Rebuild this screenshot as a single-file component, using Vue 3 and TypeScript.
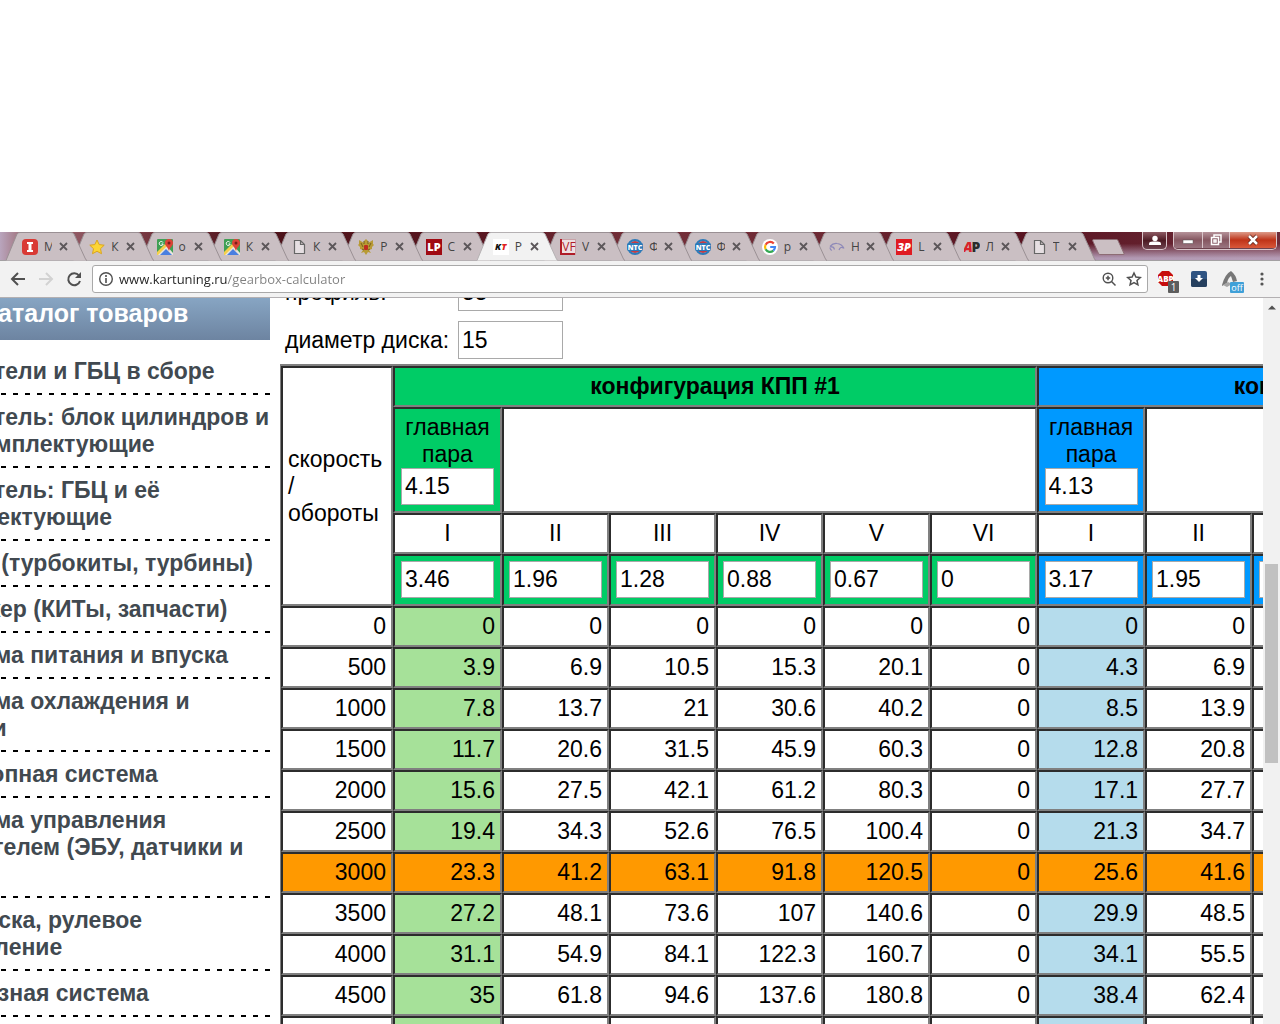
<script setup lang="ts">
import { ref } from 'vue'

interface Tab {
  icon: string
  title: string
  active?: boolean
}

interface Config {
  name: string
  theme: string
  main: string
  ratios: string[]
}

const tabs: Tab[] = [
  { icon: 'info', title: 'М' },
  { icon: 'star', title: 'К' },
  { icon: 'maps', title: 'о' },
  { icon: 'maps', title: 'К' },
  { icon: 'page', title: 'К' },
  { icon: 'eagle', title: 'Р' },
  { icon: 'lp', title: 'С' },
  { icon: 'kt', title: 'Р', active: true },
  { icon: 'vf', title: 'V' },
  { icon: 'ntc', title: 'Ф' },
  { icon: 'ntc', title: 'Ф' },
  { icon: 'google', title: 'р' },
  { icon: 'car', title: 'Н' },
  { icon: 'zr', title: 'L' },
  { icon: 'ar', title: 'Л' },
  { icon: 'page', title: 'Т' },
]

const address = ref('www.kartuning.ru/gearbox-calculator')
const profile = ref('55')
const diameter = ref('15')

const catalog: string[][] = [
  ['Двигатели и ГБЦ в сборе'],
  ['Двигатель: блок цилиндров и', 'его комплектующие'],
  ['Двигатель: ГБЦ и её', 'комплектующие'],
  ['Турбо (турбокиты, турбины)'],
  ['Чарджер (КИТы, запчасти)'],
  ['Система питания и впуска'],
  ['Система охлаждения и', 'смазки'],
  ['Выхлопная система'],
  ['Система управления', 'двигателем (ЭБУ, датчики и', 'т.п.)'],
  ['Подвеска, рулевое', 'управление'],
  ['Тормозная система'],
  ['Кузов'],
]

const gears = ['I', 'II', 'III', 'IV', 'V', 'VI']

const configs = ref<Config[]>([
  { name: 'конфигурация КПП #1', theme: 'green', main: '4.15', ratios: ['3.46', '1.96', '1.28', '0.88', '0.67', '0'] },
  { name: 'конфигурация КПП #2', theme: 'blue', main: '4.13', ratios: ['3.17', '1.95', '1.36', '0.94', '0.78', '0'] },
])

const rows: { rpm: number; first: number[]; second: number[] }[] = [
  { rpm: 0, first: [0, 0, 0, 0, 0, 0], second: [0, 0, 0, 0, 0, 0] },
  { rpm: 500, first: [3.9, 6.9, 10.5, 15.3, 20.1, 0], second: [4.3, 6.9, 9.9, 14.4, 17.3, 0] },
  { rpm: 1000, first: [7.8, 13.7, 21, 30.6, 40.2, 0], second: [8.5, 13.9, 19.9, 28.8, 34.7, 0] },
  { rpm: 1500, first: [11.7, 20.6, 31.5, 45.9, 60.3, 0], second: [12.8, 20.8, 29.8, 43.2, 52, 0] },
  { rpm: 2000, first: [15.6, 27.5, 42.1, 61.2, 80.3, 0], second: [17.1, 27.7, 39.8, 57.5, 69.4, 0] },
  { rpm: 2500, first: [19.4, 34.3, 52.6, 76.5, 100.4, 0], second: [21.3, 34.7, 49.7, 71.9, 86.7, 0] },
  { rpm: 3000, first: [23.3, 41.2, 63.1, 91.8, 120.5, 0], second: [25.6, 41.6, 59.7, 86.3, 104, 0] },
  { rpm: 3500, first: [27.2, 48.1, 73.6, 107, 140.6, 0], second: [29.9, 48.5, 69.6, 100.7, 121.4, 0] },
  { rpm: 4000, first: [31.1, 54.9, 84.1, 122.3, 160.7, 0], second: [34.1, 55.5, 79.5, 115.1, 138.7, 0] },
  { rpm: 4500, first: [35, 61.8, 94.6, 137.6, 180.8, 0], second: [38.4, 62.4, 89.5, 129.5, 156.1, 0] },
  { rpm: 5000, first: [38.9, 68.7, 105.1, 152.9, 200.9, 0], second: [42.7, 69.3, 99.4, 143.9, 173.4, 0] },
]
</script>

<template>
  <div class="window">
    <header class="tabstrip">
      <div class="tabs" role="tablist">
        <div v-for="(tab, i) in tabs" :key="i" class="tab" :class="{ active: tab.active }" :style="{ zIndex: tab.active ? 40 : 20 - i }">
          <svg class="shape" viewBox="0 0 81 29" preserveAspectRatio="none">
            <path d="M0 28.500 L11 2 Q12 .5 14 .5 H65 Q67 .5 68 2 L79 26 Q80 28.500 81 28.500" />
          </svg>
          <button class="tab-main" type="button" role="tab">
            <svg class="favicon" viewBox="0 0 16 16">
              <template v-if="tab.icon === 'info'">
                <rect width="16" height="16" rx="4" fill="#d93a35" />
                <path d="M5 3h6v2H9.500v6H11v2H5v-2h1.500V5H5z" fill="#fff" />
              </template>
              <path v-else-if="tab.icon === 'star'" d="M8 1l2.200 4.600 5 .6-3.700 3.500 1 5L8 12.300 3.500 14.700l1-5L.8 6.200l5-.6z" fill="#fcd535" stroke="#dba520" />
              <template v-else-if="tab.icon === 'maps'">
                <rect width="16" height="16" rx="1" fill="#3f9f54" />
                <path d="M0 15L9 6l7 8v2H1z" fill="#e8e5dc" />
                <path d="M3 16l6-6 6 6z" fill="#4a7fe0" />
                <path d="M0 16V13L8 5l2 2-9 9z" fill="#f5cf4a" />
                <path d="M12 0c3 0 4 2 4 4 0 3-3 4-4 8-1-4-4-5-4-8 0-2 1-4 4-4z" fill="#dc4437" />
                <circle cx="12" cy="4" r="1.500" fill="#7d1e18" />
                <path d="M6 3.500A2 2 0 1 0 6.200 5H4.500" fill="none" stroke="#fff" />
              </template>
              <path v-else-if="tab.icon === 'page'" d="M3.500 1.500h6l4 4v9h-10zM9.500 1.500v4h4" fill="#e6dfe2" stroke="#666" stroke-width="1.200" />
              <template v-else-if="tab.icon === 'eagle'">
                <path d="M6 2l2-2 2 2v2l5-3v4l1 1-2 2v2l-3 1 2 3-3-1-2 3-2-3-3 1 2-3-3-1V8L0 6l1-1V1l5 3z" fill="#b89a35" />
                <path d="M6 2v3M10 2v3M3 4l2 4M13 4l-2 4M4 10l2 1M12 10l-2 1" stroke="#77601c" />
                <rect x="6" y="6" width="4" height="5" rx="1" fill="#bd2d20" />
              </template>
              <template v-else-if="tab.icon === 'lp'">
                <rect width="16" height="16" fill="#a00a12" />
                <text x="8" y="12" class="ico" font-size="11" fill="#fff">LP</text>
              </template>
              <template v-else-if="tab.icon === 'kt'">
                <rect width="16" height="16" fill="#fff" />
                <text x="5" y="11" class="ico slant" font-size="9" fill="#111">K</text>
                <text x="11" y="11" class="ico slant" font-size="9" fill="#e02020">T</text>
              </template>
              <template v-else-if="tab.icon === 'vf'">
                <rect x=".5" y=".5" width="15" height="15" fill="#eee0e2" stroke="#c9a3a8" />
                <path d="M1 0v15h14" fill="none" stroke="#b01c28" stroke-width="2" />
                <text x="9" y="12" class="ico thin" font-size="12" fill="#b01c28">VF</text>
              </template>
              <template v-else-if="tab.icon === 'ntc'">
                <circle cx="8" cy="8" r="6" fill="#c53b44" />
                <circle cx="8" cy="8" r="7" fill="none" stroke="#2d7ab8" stroke-width="2" />
                <rect y="4" width="16" height="8" rx="2" fill="#2d7ab8" />
                <text x="8" y="11" class="ico" font-size="7" fill="#fff">NTC</text>
              </template>
              <template v-else-if="tab.icon === 'google'">
                <circle cx="8" cy="8" r="8" fill="#fff" />
                <g fill="none" stroke-width="2.200">
                  <path d="M11.800 4.600A5 5 0 0 0 3.600 5.700" stroke="#ea4335" />
                  <path d="M3.600 5.700a5 5 0 0 0 0 4.600" stroke="#fbbc05" />
                  <path d="M3.600 10.300a5 5 0 0 0 7.700 1.400" stroke="#34a853" />
                  <path d="M11.300 11.700A5 5 0 0 0 13 8H8.200" stroke="#4285f4" />
                </g>
              </template>
              <path v-else-if="tab.icon === 'car'" d="M1 7.500Q4 4 8 4.500q5 .5 7 5M1 8.500q.5 3 2 2.500M1.500 8q3-1 4 2.500M10 11q1.500-4 4.500-2" fill="none" stroke="#8d88b8" stroke-width="1.200" />
              <template v-else-if="tab.icon === 'zr'">
                <rect width="16" height="16" fill="#e01b22" />
                <text x="8" y="12" class="ico slant" font-size="11" fill="#fff">ЗР</text>
              </template>
              <template v-else>
                <text x="4" y="13" class="ico slant" font-size="14" fill="#d9232a">A</text>
                <text x="12" y="13" class="ico" font-size="14" fill="#2b2b2b">P</text>
              </template>
            </svg>
            <span class="title">{{ tab.title }}</span>
          </button>
          <button class="tab-close" type="button" aria-label="Закрыть вкладку">
            <svg viewBox="0 0 9 9"><path d="M1 1l7 7M8 1l-7 7" stroke="#5c575a" stroke-width="1.800" /></svg>
          </button>
        </div>
      </div>
      <button class="new-tab" type="button" aria-label="Новая вкладка">
        <svg viewBox="0 0 33 16"><path d="M1.500 .5h23q1 0 1.500 1l6 13q.5 1-1 1H8q-1 0-1.500-1L.8 2Q.3.5 1.500 .5z" fill="#cbbfc3" stroke="#8d6c74" /></svg>
      </button>
      <div class="controls">
        <button class="profile" type="button" aria-label="Профиль">
          <svg viewBox="0 0 12 12"><circle cx="6" cy="3.500" r="2.700" fill="#fff" /><path d="M0 10V8.500Q0 6.500 4 6.500h4q4 0 4 2V10z" fill="#fff" /></svg>
        </button>
        <div class="group">
          <button class="min" type="button" aria-label="Свернуть">
            <svg viewBox="0 0 12 12"><rect x="1" y="6" width="10" height="3.500" fill="#fff" stroke="#555" stroke-width=".5" /></svg>
          </button>
          <button class="max" type="button" aria-label="Восстановить">
            <svg viewBox="0 0 12 12"><path d="M4 3V1h7v7H9M1.500 3.500h7v7h-7zM4 6h2v2H4z" fill="none" stroke="#fff" stroke-width="1.500" /></svg>
          </button>
          <button class="close" type="button" aria-label="Закрыть">
            <svg viewBox="0 0 12 12"><path d="M2 2l8 8M10 2l-8 8" stroke="#5b2018" stroke-width="4" /><path d="M2 2l8 8M10 2l-8 8" stroke="#fff" stroke-width="2.500" /></svg>
          </button>
        </div>
      </div>
    </header>

    <nav class="toolbar">
      <button class="nav" type="button" aria-label="Назад">
        <svg viewBox="0 0 16 16"><path d="M15 8H2M8 2L2 8l6 6" fill="none" stroke="#505050" stroke-width="2" /></svg>
      </button>
      <button class="nav" type="button" aria-label="Вперёд">
        <svg viewBox="0 0 16 16"><path d="M1 8h13M8 2l6 6-6 6" fill="none" stroke="#d2d2d2" stroke-width="2" /></svg>
      </button>
      <button class="nav" type="button" aria-label="Обновить">
        <svg viewBox="0 0 16 16"><path d="M13 4.500A6 6 0 1 0 14 10" fill="none" stroke="#505050" stroke-width="2" /><path d="M15 1v6H9z" fill="#505050" /></svg>
      </button>
      <div class="omnibox">
        <svg viewBox="0 0 16 16"><circle cx="8" cy="8" r="6.300" fill="none" stroke="#505050" stroke-width="1.400" /><path d="M8 7v5M8 4v2" stroke="#505050" stroke-width="1.600" /></svg>
        <input v-model="address" type="text" aria-label="Адрес" />
        <button type="button" aria-label="Масштаб">
          <svg viewBox="0 0 16 16"><circle cx="7" cy="7" r="4.800" fill="none" stroke="#505050" stroke-width="1.400" /><path d="M10.500 10.500L14.500 14.500M7 4.800v4.400M4.800 7h4.400" stroke="#505050" stroke-width="1.500" /></svg>
        </button>
        <button type="button" aria-label="Добавить в закладки">
          <svg viewBox="0 0 16 16"><path d="M8 2l1.900 4 4.400.5-3.300 3 .9 4.400L8 11.700l-3.900 2.200.9-4.400-3.300-3L6.100 6z" fill="none" stroke="#505050" stroke-width="1.500" /></svg>
        </button>
      </div>
      <div class="extensions">
        <button type="button" aria-label="Adblock">
          <svg viewBox="0 0 24 24">
            <path d="M6 2h7l4 4v7l-4 4H6l-4-4V6z" fill="#c70d0d" />
            <text x="9.500" y="13" class="ico" font-size="8" fill="#fff">ABP</text>
            <rect x="12" y="12" width="11" height="12" rx="1" fill="#5d5d5d" />
            <text x="17.500" y="22" class="ico thin" font-size="10" fill="#fff">1</text>
          </svg>
        </button>
        <button type="button" aria-label="Загрузки">
          <svg viewBox="0 0 24 24">
            <rect x="3" y="2" width="16" height="16" rx="2" fill="#2f5482" />
            <path d="M3 10h16v6q0 2-2 2H5q-2 0-2-2z" fill="#26405f" />
            <path d="M9.500 6h3v3H15l-4 4-4-4h2.500z" fill="#fff" />
          </svg>
        </button>
        <button type="button" aria-label="Расширение">
          <svg viewBox="0 0 24 24">
            <path d="M2 16Q5 5 11 2q5 4 6 10l-4 1-2-6q-3 2-4 7l-5 3z" fill="#777" />
            <path d="M3 16l5-3 4 2-5 3z" fill="#a5a5a5" />
            <rect x="10" y="13" width="14" height="11" rx="1" fill="#3fa0d8" />
            <text x="17" y="22" class="ico thin" font-size="9" fill="#fff">off</text>
          </svg>
        </button>
        <button type="button" aria-label="Меню">
          <svg viewBox="0 0 24 24"><g fill="#555"><circle cx="10" cy="5" r="1.600" /><circle cx="10" cy="10" r="1.600" /><circle cx="10" cy="15" r="1.600" /></g></svg>
        </button>
      </div>
    </nav>

    <div class="viewport">
      <aside class="sidebar">
        <h2>каталог товаров</h2>
        <ul>
          <li v-for="(item, i) in catalog" :key="i">
            <a href="#"><span v-for="line in item" :key="line">{{ line }}</span></a>
          </li>
        </ul>
      </aside>

      <main class="content">
        <form class="params" @submit.prevent>
          <label for="profile">профиль:</label>
          <input id="profile" v-model="profile" type="text" />
          <label for="diameter">диаметр диска:</label>
          <input id="diameter" v-model="diameter" type="text" />
        </form>

        <table class="calc">
          <colgroup>
            <col class="c-rpm" />
            <template v-for="c in configs" :key="c.theme">
              <col :class="'c-first-' + c.theme" />
              <col v-for="n in 5" :key="n" class="c-gear" />
            </template>
          </colgroup>
          <tbody>
            <tr>
              <td rowspan="4" class="corner">скорость<br />/<br />обороты</td>
              <th v-for="c in configs" :key="c.theme" colspan="6" :class="c.theme">{{ c.name }}</th>
            </tr>
            <tr>
              <template v-for="c in configs" :key="c.theme">
                <td class="entry" :class="c.theme">
                  <label :for="'main-' + c.theme">главная<br />пара</label>
                  <input :id="'main-' + c.theme" v-model="c.main" type="text" />
                </td>
                <td colspan="5"></td>
              </template>
            </tr>
            <tr>
              <template v-for="c in configs" :key="c.theme">
                <td v-for="g in gears" :key="g" class="gear">{{ g }}</td>
              </template>
            </tr>
            <tr>
              <template v-for="c in configs" :key="c.theme">
                <td v-for="(g, i) in gears" :key="g" class="entry" :class="c.theme">
                  <input v-model="c.ratios[i]" type="text" :aria-label="'передача ' + g" />
                </td>
              </template>
            </tr>
            <tr v-for="row in rows" :key="row.rpm" class="data" :class="{ marked: row.rpm === 3000 }">
              <td>{{ row.rpm }}</td>
              <td v-for="(v, i) in row.first" :key="'a' + i" :class="{ 'soft-green': i === 0 }">{{ v }}</td>
              <td v-for="(v, i) in row.second" :key="'b' + i" :class="{ 'soft-blue': i === 0 }">{{ v }}</td>
            </tr>
          </tbody>
        </table>
      </main>

      <div class="scrollbar">
        <svg viewBox="0 0 17 17"><path d="M5 11.500l4-4 4 4z" fill="#505050" /></svg>
        <div class="thumb"></div>
      </div>
    </div>
  </div>
</template>

<style>
body {
  margin: 0;
  background: #fff;
}
</style>

<style scoped>
.window {
  box-sizing: border-box;
  height: 100vh;
  padding-top: 232px;
  display: flex;
  flex-direction: column;
  overflow: hidden;
  font-family: "Liberation Sans", Arial, sans-serif;
  color: #000;
}
button {
  border: 0;
  padding: 0;
  background: none;
  font: inherit;
}
svg {
  display: block;
}
.ico {
  font-family: "Open Sans", sans-serif;
  font-weight: 800;
  text-anchor: middle;
}
.slant {
  font-style: italic;
}
.thin {
  font-weight: 400;
}

.tabstrip {
  flex: none;
  display: flex;
  height: 29px;
  padding-left: 6px;
  background:
    linear-gradient(rgba(255, 255, 255, 0) 40%, rgba(205, 195, 225, 0.75) 90%) right / 216px 100% no-repeat,
    linear-gradient(90deg, #b9a5bd, #a27580 20px, #80404a 120px, #4c1219 260px, #5a1822 480px, #74303a 640px, #6c2833 850px, #571320 1000px, #6e2b38);
  box-shadow: inset 0 -1px #a3a0a2;
}
.tabs {
  display: flex;
  width: 1076px;
}
.tab {
  position: relative;
  flex: 1;
  min-width: 0;
  display: flex;
  align-items: center;
}
.shape {
  position: absolute;
  left: 0;
  top: 0;
  width: 81px;
  height: 29px;
  fill: #cabfc3;
  stroke: #9a9094;
}
.active .shape {
  fill: #f2f2f2;
  stroke: #b5b1b3;
}
.tab-main {
  position: relative;
  display: flex;
  align-items: center;
  gap: 6px;
  margin-left: 16px;
}
.favicon {
  width: 16px;
  height: 16px;
}
.title {
  width: 8px;
  overflow: hidden;
  text-align: left;
  font: 12px/16px "Open Sans", sans-serif;
  color: #444;
}
.tab-close {
  position: relative;
  flex: none;
  margin-left: 7px;
}
.tab-close svg {
  width: 9px;
  height: 9px;
}
.new-tab {
  align-self: flex-start;
  margin: 7px 0 0 10px;
}
.new-tab svg {
  width: 33px;
  height: 16px;
}
.controls {
  display: flex;
  align-items: flex-start;
  gap: 6px;
  margin: 0 3px 0 auto;
}
.controls button {
  display: flex;
  align-items: center;
  justify-content: center;
  height: 16px;
}
.controls svg {
  width: 12px;
  height: 12px;
}
.controls .profile,
.group {
  box-sizing: border-box;
  height: 18px;
  border: 1px solid #d8c5ca;
  border-top: 0;
  border-radius: 0 0 5px 5px;
  background: linear-gradient(#8d5a63, #4d1a23 50%, #6f4450);
}
.controls .profile {
  width: 25px;
}
.group {
  display: flex;
  overflow: hidden;
}
.controls .min {
  width: 28px;
  background: linear-gradient(#b59299, #855660 50%, #9a7580);
}
.controls .max {
  width: 27px;
  border-left: 1px solid #d8c5ca;
  background: linear-gradient(#b59299, #855660 50%, #9a7580);
}
.controls .close {
  width: 47px;
  border-left: 1px solid #d8c5ca;
  background: linear-gradient(#dc9a88, #bf3318 50%, #d9583a);
}

.toolbar {
  flex: none;
  box-sizing: border-box;
  height: 37px;
  display: flex;
  align-items: center;
  padding-left: 10px;
  background: #f2f2f2;
  border-bottom: 1px solid #b3b0b2;
}
.nav {
  margin-right: 12px;
}
.nav svg {
  width: 16px;
  height: 16px;
}
.nav:nth-child(3) {
  margin-right: 10px;
}
.omnibox {
  box-sizing: border-box;
  flex: 1;
  height: 28px;
  display: flex;
  align-items: center;
  gap: 9px;
  padding: 0 5px;
  border: 1px solid #a9a9a9;
  border-radius: 3px;
  background: #fff;
}
.omnibox svg {
  width: 16px;
  height: 16px;
}
.omnibox input {
  flex: 1;
  min-width: 0;
  margin-left: -4px;
  padding: 0;
  border: 0;
  outline: 0;
  font: 13px/20px "Open Sans", sans-serif;
  color: transparent;
  background: linear-gradient(90deg, #222 108px, #808080 108px);
  background-clip: text;
}
.extensions {
  display: flex;
  gap: 8px;
  padding: 4px 4px 0 8px;
}
.extensions svg {
  width: 24px;
  height: 24px;
}

.viewport {
  flex: 1;
  min-height: 0;
  display: flex;
  overflow: hidden;
}
.sidebar {
  flex: none;
  width: 358px;
  margin-left: -88px;
}
h2 {
  margin: 0;
  padding-right: 8px;
  height: 42px;
  text-align: center;
  font-size: 25px;
  line-height: 31px;
  color: #fff;
  background: linear-gradient(#87a5c3, #6d84a1);
}
ul {
  list-style: none;
  margin: 0;
  padding: 9px 0 0;
}
li {
  padding: 9px 0 10px 15px;
  background: repeating-linear-gradient(270deg, #000 0 5px, transparent 5px 12px) bottom / 100% 2px no-repeat;
}
li a {
  display: block;
  font-size: 23px;
  line-height: 27px;
  font-weight: bold;
  color: #414950;
  text-decoration: none;
}
li span {
  display: block;
  white-space: nowrap;
}

.content {
  flex: 1;
  min-width: 0;
  margin-left: 10px;
  overflow: hidden;
  font-size: 23px;
  line-height: 27px;
}
.params {
  display: grid;
  grid-template-columns: 163px 105px;
  gap: 10px;
  align-items: center;
  margin: -25px 0 5px;
  padding-left: 5px;
}
input {
  font-family: inherit;
}
.params input,
.entry input {
  box-sizing: border-box;
  height: 38px;
  padding: 0 3px;
  border: 1px solid #a9a9a9;
  border-radius: 0;
  background: #fff;
  font-size: 23px;
  color: #000;
}
.params label {
  white-space: nowrap;
}

.calc {
  table-layout: fixed;
  width: 1401px;
  border-collapse: separate;
  border-spacing: 0;
  border: solid #808080;
  border-width: 2px 1px;
}
.c-rpm {
  width: 112px;
}
.c-first-green {
  width: 109px;
}
.c-first-blue {
  width: 108px;
}
.c-gear {
  width: 107px;
}
td,
th {
  box-sizing: border-box;
  padding: 5px;
  border: 2px solid;
  border-color: #2c2c2c #808080 #808080 #2c2c2c;
}
.green {
  background: #00cc66;
}
.blue {
  background: #0099ff;
}
.gear {
  text-align: center;
}
.entry {
  padding: 5px 0 6px;
  text-align: center;
}
.entry label {
  display: block;
}
.entry input {
  display: block;
  width: 93px;
  height: 37px;
  margin: 0 auto;
}
.data td {
  text-align: right;
}
.data .soft-green {
  background: #a6e199;
}
.data .soft-blue {
  background: #b5dcec;
}
.marked td,
.marked .soft-green,
.marked .soft-blue {
  background: #ff9900;
}

.scrollbar {
  flex: none;
  width: 17px;
  background: #f1f1f1;
}
.scrollbar svg {
  width: 17px;
  height: 17px;
}
.thumb {
  width: 13px;
  height: 199px;
  margin: 249px 2px 0;
  background: #c1c1c1;
}
</style>
